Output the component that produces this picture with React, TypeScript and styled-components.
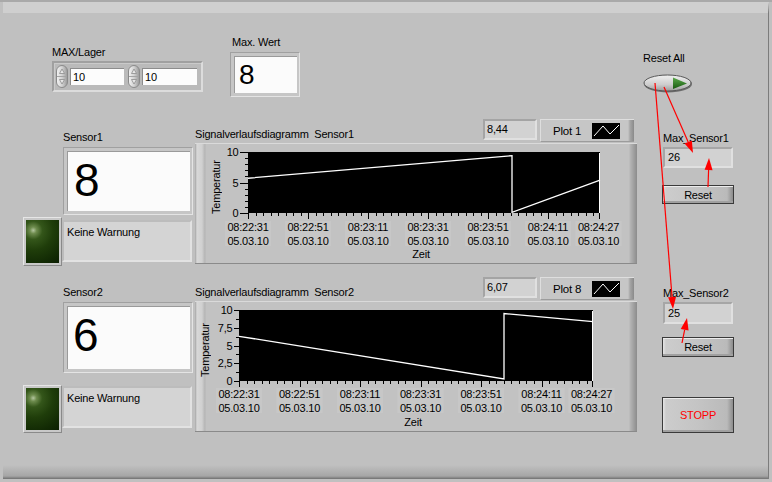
import React from "react";
import styled, { createGlobalStyle } from "styled-components";

const GlobalStyle = createGlobalStyle`
  html, body {
    margin: 0;
    padding: 0;
    background: #c0c0c0;
  }
  body {
    font-family: "Liberation Sans", Arial, sans-serif;
    font-size: 11px;
    letter-spacing: -0.2px;
    color: #000;
  }
`;

const Screen = styled.div`
  position: relative;
  width: 772px;
  height: 482px;
  box-sizing: border-box;
  padding: 2px 0 0 3px;
  overflow: hidden;
  background: linear-gradient(to bottom, #a9a9a9 0, #a9a9a9 2px, #c0c0c0 2px);
`;

const Frame = styled.div`
  display: flex;
  width: 766px;
  height: 477px;
  box-sizing: border-box;
  border-top: 11px solid #cfcfcf;
  border-right: 1px solid #7c7c7c;
  background: linear-gradient(
    to bottom,
    #c0c0c0 0,
    #c0c0c0 calc(100% - 14px),
    #a6a6a6 calc(100% - 3px),
    #707070 100%
  );
`;

const Main = styled.div`
  display: flex;
  flex-direction: column;
  width: 637px;
`;

const TopRow = styled.div`
  display: flex;
  align-items: flex-start;
  height: 106px;
`;

const Control = styled.div<{ $left: number; $top: number }>`
  display: flex;
  flex-direction: column;
  align-items: flex-start;
  margin: ${(p) => p.$top}px 0 0 ${(p) => p.$left}px;
`;

const Label = styled.div<{ $gap?: number; $left?: number }>`
  line-height: 13px;
  white-space: nowrap;
  margin-bottom: ${(p) => p.$gap ?? 0}px;
  margin-left: ${(p) => p.$left ?? 0}px;
`;

/* MAX/Lager cluster */
const Cluster = styled.div`
  display: flex;
  align-items: center;
  gap: 4px;
  width: 151px;
  height: 31px;
  box-sizing: border-box;
  padding-left: 2px;
  background: #bababa;
  border: 2px solid;
  border-color: #a0a0a0 #dcdcdc #dcdcdc #a0a0a0;
  box-shadow: inset 1px 1px 0 #cacaca;
`;

const NumberControl = styled.div`
  display: flex;
  align-items: center;
  gap: 2px;
`;

const NumField = styled.div<{ $w: number }>`
  width: ${(p) => p.$w}px;
  height: 17px;
  box-sizing: border-box;
  padding-left: 2px;
  line-height: 16px;
  background: #fcfcfc;
  border-top: 1px solid #8c8c8c;
  border-left: 1px solid #8c8c8c;
`;

function Spinner() {
  return (
    <svg width="12" height="23" viewBox="0 0 12 23">
      <defs>
        <linearGradient id="spin" x1="0" y1="0" x2="1" y2="0">
          <stop offset="0" stopColor="#f4f4f4" />
          <stop offset="0.5" stopColor="#d2d2d2" />
          <stop offset="1" stopColor="#989898" />
        </linearGradient>
      </defs>
      <rect x="0.5" y="0.5" width="11" height="22" rx="5.5" fill="url(#spin)" stroke="#8a8a8a" />
      <line x1="1" y1="11.5" x2="11" y2="11.5" stroke="#a4a4a4" />
      <path d="M6 4 L3.5 8.5 H8.5 Z" fill="#e8e8e8" stroke="#8c8c8c" strokeWidth="0.8" />
      <path d="M6 19 L3.5 14.5 H8.5 Z" fill="#e8e8e8" stroke="#8c8c8c" strokeWidth="0.8" />
    </svg>
  );
}

/* numeric indicators */
const Indicator = styled.div<{ $w: number; $h: number }>`
  width: ${(p) => p.$w}px;
  height: ${(p) => p.$h}px;
  box-sizing: border-box;
  padding: 3px 2px 3px 3px;
  background: #c6c6c6;
  border: 1px solid;
  border-color: #a0a0a0 #e4e4e4 #e4e4e4 #a0a0a0;
`;

const IndicatorValue = styled.div<{ $size: number; $indent: number; $lift: number }>`
  display: flex;
  align-items: center;
  height: 100%;
  box-sizing: border-box;
  padding: 0 0 ${(p) => p.$lift}px ${(p) => p.$indent}px;
  background: #fbfbfb;
  border-top: 1px solid #9a9a9a;
  border-left: 1px solid #9a9a9a;
  font-size: ${(p) => p.$size}px;
  line-height: 1;
  letter-spacing: 0;
`;

/* sensor rows */
const SensorRow = styled.div<{ $top: number }>`
  display: grid;
  grid-template-columns: 173px 442px;
  align-items: start;
  margin: ${(p) => p.$top}px 0 0 19px;
`;

const SensorBlock = styled.div<{ $pad: number }>`
  display: flex;
  flex-direction: column;
  align-items: flex-start;
  padding-top: ${(p) => p.$pad}px;
`;

const SensorLabel = styled.div<{ $gap: number }>`
  margin: 0 0 ${(p) => p.$gap}px 41px;
  line-height: 13px;
`;

const SensorValue = styled.div`
  margin-left: 41px;
`;

const WarnRow = styled.div<{ $top: number }>`
  display: flex;
  align-items: flex-start;
  margin: ${(p) => p.$top}px 0 0 1px;
`;

const Led = styled.div<{ $h: number }>`
  width: 39px;
  height: ${(p) => p.$h}px;
  box-sizing: border-box;
  padding: 2px 2px 2px 2px;
  background: #c8c8c8;
  border: 1px solid;
  border-color: #e6e6e6 #8a8a8a #8a8a8a #e6e6e6;
`;

const LedLight = styled.div`
  height: 100%;
  background: radial-gradient(
    circle at 22% 24%,
    #b4c6a0 0,
    #6e8c4e 8%,
    #34561a 22%,
    #1f3d0a 48%,
    #122a04 80%,
    #0c1f02 100%
  );
`;

const StringBox = styled.div<{ $h: number; $top: number }>`
  width: 130px;
  height: ${(p) => p.$h}px;
  margin-top: ${(p) => p.$top}px;
  box-sizing: border-box;
  padding: 4px 3px;
  line-height: 13px;
  background: #d4d4d4;
  border: 2px solid;
  border-color: #bcbcbc #e2e2e2 #e2e2e2 #bcbcbc;
`;

/* graphs */
const GraphBlock = styled.div`
  display: flex;
  flex-direction: column;
`;

const GraphHeader = styled.div`
  display: flex;
  align-items: flex-end;
  height: 23px;
  padding-right: 3px;
`;

const GraphTitle = styled.div`
  margin: 0 auto 1px 0;
  line-height: 13px;
  white-space: pre;
`;

const ValueDisplay = styled.div`
  align-self: flex-start;
  width: 54px;
  height: 21px;
  margin-right: 3px;
  box-sizing: border-box;
  padding-left: 2px;
  line-height: 17px;
  background: #d2d2d2;
  border: 2px solid;
  border-color: #a4a4a4 #e0e0e0 #e0e0e0 #a4a4a4;
`;

const Legend = styled.div`
  display: flex;
  align-items: center;
  width: 94px;
  height: 23px;
  box-sizing: border-box;
  padding: 0 14px 0 12px;
  background: linear-gradient(
    to right,
    #c6c6c6 0,
    #c6c6c6 calc(100% - 6px),
    #a6a6a6 calc(100% - 4px),
    #8a8a8a 100%
  );
  border-top: 1px solid #dedede;
  border-left: 1px solid #dedede;
  border-bottom: 1px solid #9c9c9c;
`;

const LegendName = styled.span`
  margin-right: auto;
  font-size: 11.5px;
`;

const GraphFrame = styled.div<{ $h: number; $title: number; $chartH: number }>`
  display: grid;
  grid-template-columns: ${(p) => p.$title}px 1fr 7px;
  grid-template-rows: ${(p) => p.$chartH}px 13px;
  height: ${(p) => p.$h}px;
  margin-top: 1px;
  box-sizing: border-box;
  border-top: 1px solid #dadada;
  border-bottom: 1px solid #8a8a8a;
  background: linear-gradient(
    to right,
    #a4a4a4 0,
    #d8d8d8 2px,
    #d0d0d0 7px,
    #b4b4b4 10px,
    #c2c2c2 11px,
    #c2c2c2 calc(100% - 8px),
    #b6b6b6 calc(100% - 7px),
    #8c8c8c 100%
  );
`;

const AxisTitle = styled.div<{ $top: number; $h: number }>`
  grid-row: 1;
  grid-column: 1;
  justify-self: end;
  align-self: start;
  height: ${(p) => p.$h}px;
  margin: ${(p) => p.$top}px 1px 0 0;
  writing-mode: vertical-rl;
  transform: rotate(180deg);
  text-align: center;
  line-height: 13px;
  white-space: nowrap;
`;

const ChartSvg = styled.svg`
  grid-row: 1;
  grid-column: 2;
  display: block;
  font-family: "Liberation Sans", Arial, sans-serif;
  font-size: 11px;
`;

const AxisName = styled.div<{ $left: number; $w: number }>`
  grid-row: 2;
  grid-column: 2;
  width: ${(p) => p.$w}px;
  margin-left: ${(p) => p.$left}px;
  box-sizing: border-box;
  padding-right: 6px;
  text-align: center;
  line-height: 13px;
`;

const TIMES = ["08:22:31", "08:22:51", "08:23:11", "08:23:31", "08:23:51", "08:24:11", "08:24:27"];

type GraphSpec = {
  title: string;
  value: string;
  plot: string;
  frameH: number;
  titleCol: number;
  chartH: number;
  plotX: number;
  plotY: number;
  plotW: number;
  plotH: number;
  yLabels: string[];
  yMinor: number;
  yMajorLen: number;
  xStep: number;
  xLabelY: number;
  series: [number, number][];
};

function Chart({ g, width }: { g: GraphSpec; width: number }) {
  const { plotX, plotY, plotW, plotH } = g;
  const bottom = plotY + plotH;
  const majors = g.yLabels.length - 1;
  const totalMinor = majors * g.yMinor;

  const yTicks = [];
  for (let i = 0; i <= totalMinor; i++) {
    const y = Math.round(plotY + (plotH * i) / totalMinor) + 0.5;
    const major = i % g.yMinor === 0;
    yTicks.push(
      <line key={i} x1={plotX - (major ? g.yMajorLen : 3)} x2={plotX} y1={y} y2={y} />
    );
  }

  const xTicks = [];
  const minorStep = g.xStep / 8;
  for (let i = 0; plotX + i * minorStep <= plotX + plotW; i++) {
    const x = Math.round(plotX + i * minorStep) + 0.5;
    const major = i % 8 === 0;
    xTicks.push(<line key={i} x1={x} x2={x} y1={bottom} y2={bottom + (major ? 6 : 3)} />);
  }
  const endX = Math.round(plotX + plotW - 1) + 0.5;
  xTicks.push(<line key="end" x1={endX} x2={endX} y1={bottom} y2={bottom + 6} />);

  const labelX = [0, 1, 2, 3, 4, 5].map((k) => plotX + k * g.xStep).concat(plotX + plotW - 1.5);

  const points = g.series
    .map(([px, v]) => `${plotX + px},${plotY + plotH * (1 - v / 10)}`)
    .join(" ");

  return (
    <ChartSvg width={width} height={g.chartH} viewBox={`0 0 ${width} ${g.chartH}`}>
      <g stroke="#000" strokeWidth="1" shapeRendering="crispEdges">
        {yTicks}
        {xTicks}
      </g>
      {g.yLabels.map((t, i) => (
        <text key={t} x={plotX - g.yMajorLen - 1.5} y={plotY + (plotH * i) / majors + 4} textAnchor="end">
          {t}
        </text>
      ))}
      <rect x={plotX} y={plotY} width={plotW} height={plotH} fill="#000" />
      <line x1={plotX + plotW - 0.5} x2={plotX + plotW - 0.5} y1={plotY + 1} y2={bottom} stroke="#fff" />
      <polyline points={points} fill="none" stroke="#fff" strokeWidth="1.3" />
      {labelX.map((x, i) => (
        <g key={i}>
          <rect x={x - 23} y={g.xLabelY - 6} width="46" height="25" fill="#c7c7c7" />
          <text x={x} y={g.xLabelY + 4} textAnchor="middle">
            {TIMES[i]}
          </text>
          <text x={x} y={g.xLabelY + 18} textAnchor="middle">
            05.03.10
          </text>
        </g>
      ))}
    </ChartSvg>
  );
}

function Swatch() {
  return (
    <svg width="28" height="16" viewBox="0 0 28 16">
      <rect width="28" height="16" fill="#000" />
      <polyline points="2,13 11,3 18,11 27,2" fill="none" stroke="#fff" strokeWidth="1" />
    </svg>
  );
}

function Graph({ g }: { g: GraphSpec }) {
  const chartW = 442 - g.titleCol - 7;
  return (
    <GraphBlock>
      <GraphHeader>
        <GraphTitle>{g.title}</GraphTitle>
        <ValueDisplay>{g.value}</ValueDisplay>
        <Legend>
          <LegendName>{g.plot}</LegendName>
          <Swatch />
        </Legend>
      </GraphHeader>
      <GraphFrame $h={g.frameH} $title={g.titleCol} $chartH={g.chartH}>
        <AxisTitle $top={g.plotY} $h={g.plotH + 10}>
          Temperatur
        </AxisTitle>
        <Chart g={g} width={chartW} />
        <AxisName $left={g.plotX} $w={g.plotW}>
          Zeit
        </AxisName>
      </GraphFrame>
    </GraphBlock>
  );
}

const graph1: GraphSpec = {
  title: "Signalverlaufsdiagramm  Sensor1",
  value: "8,44",
  plot: "Plot 1",
  frameH: 121,
  titleCol: 29,
  chartH: 104,
  plotX: 24,
  plotY: 8,
  plotW: 352,
  plotH: 61,
  yLabels: ["10", "5", "0"],
  yMinor: 5,
  yMajorLen: 8,
  xStep: 60,
  xLabelY: 83,
  series: [
    [0, 5.7],
    [264, 9.4],
    [264, 0.1],
    [352, 5.4],
  ],
};

const graph2: GraphSpec = {
  title: "Signalverlaufsdiagramm  Sensor2",
  value: "6,07",
  plot: "Plot 8",
  frameH: 131,
  titleCol: 18,
  chartH: 114,
  plotX: 26,
  plotY: 8,
  plotW: 354,
  plotH: 71,
  yLabels: ["10", "7,5", "5", "2,5", "0"],
  yMinor: 2,
  yMajorLen: 5,
  xStep: 60.5,
  xLabelY: 92,
  series: [
    [0, 6.3],
    [265, 0.3],
    [265, 9.5],
    [354, 8.35],
  ],
};

/* right column */
const Side = styled.div`
  display: flex;
  flex-direction: column;
  align-items: flex-start;
  padding-left: 3px;
`;

const SideLabel = styled.div<{ $top: number; $left?: number }>`
  margin: ${(p) => p.$top}px 0 0 ${(p) => p.$left ?? 0}px;
  line-height: 13px;
  white-space: nowrap;
`;

const SideField = styled.div<{ $top: number; $h: number }>`
  width: 70px;
  height: ${(p) => p.$h}px;
  margin: ${(p) => p.$top}px 0 0 20px;
  box-sizing: border-box;
  padding-left: 3px;
  line-height: ${(p) => p.$h - 4}px;
  background: #d2d2d2;
  border: 2px solid;
  border-color: #a6a6a6 #e0e0e0 #e0e0e0 #a6a6a6;
`;

const PanelButton = styled.button<{ $top: number; $h: number; $color?: string }>`
  display: block;
  width: 72px;
  height: ${(p) => p.$h}px;
  margin: ${(p) => p.$top}px 0 0 19px;
  padding: 0;
  box-sizing: border-box;
  border: 1px solid #3a3a3a;
  background: linear-gradient(
    to right,
    #e4e4e4 0,
    #cccccc 3px,
    #c4c4c4 50%,
    #bababa calc(100% - 6px),
    #8c8c8c 100%
  );
  box-shadow: inset 0 1px 0 #ececec, inset 0 -2px 0 #a0a0a0;
  font: inherit;
  letter-spacing: inherit;
  color: ${(p) => p.$color ?? "#000"};
`;

const OvalButton = styled.svg`
  display: block;
  margin-top: 9px;
`;

function ResetAllButton() {
  return (
    <OvalButton width="50" height="19" viewBox="0 0 50 19">
      <defs>
        <linearGradient id="oval" x1="0" y1="0" x2="0" y2="1">
          <stop offset="0" stopColor="#f0f0f0" />
          <stop offset="0.6" stopColor="#cdcdcd" />
          <stop offset="1" stopColor="#9c9c9c" />
        </linearGradient>
        <linearGradient id="go" x1="0" y1="0" x2="0" y2="1">
          <stop offset="0" stopColor="#5aa84a" />
          <stop offset="1" stopColor="#185a10" />
        </linearGradient>
      </defs>
      <ellipse cx="25" cy="10" rx="24" ry="8.5" fill="#6e6e6e" />
      <ellipse cx="24.5" cy="9" rx="23.5" ry="8" fill="url(#oval)" stroke="#585858" />
      <path d="M30 3.5 L44 9.5 L30 15 Z" fill="url(#go)" />
    </OvalButton>
  );
}

/* red wiring arrows on top of the panel */
const Overlay = styled.svg`
  position: absolute;
  top: 0;
  left: 0;
  pointer-events: none;
`;

const ARROWS: [number, number, number, number][] = [
  [655, 83, 673, 309],
  [664, 87, 693, 153],
  [708, 187, 709, 158],
  [682, 343, 687, 318],
];

function Arrow({ a }: { a: [number, number, number, number] }) {
  const [x1, y1, x2, y2] = a;
  const len = Math.hypot(x2 - x1, y2 - y1);
  const ux = (x2 - x1) / len;
  const uy = (y2 - y1) / len;
  const bx = x2 - ux * 12;
  const by = y2 - uy * 12;
  const pts = `${x2},${y2} ${bx - uy * 4},${by + ux * 4} ${bx + uy * 4},${by - ux * 4}`;
  return (
    <g>
      <line x1={x1} y1={y1} x2={bx} y2={by} stroke="#ff0000" strokeWidth="1.2" />
      <polygon points={pts} fill="#ff0000" />
    </g>
  );
}

export default function App() {
  return (
    <>
      <GlobalStyle />
      <Screen>
        <Frame>
          <Main>
            <TopRow>
              <Control $left={49} $top={33}>
                <Label $gap={2}>MAX/Lager</Label>
                <Cluster>
                  <NumberControl>
                    <Spinner />
                    <NumField $w={54}>10</NumField>
                  </NumberControl>
                  <NumberControl>
                    <Spinner />
                    <NumField $w={55}>10</NumField>
                  </NumberControl>
                </Cluster>
              </Control>
              <Control $left={27} $top={23}>
                <Label $gap={3} $left={2}>
                  Max. Wert
                </Label>
                <Indicator $w={70} $h={45}>
                  <IndicatorValue $size={28} $indent={4} $lift={0}>
                    8
                  </IndicatorValue>
                </Indicator>
              </Control>
            </TopRow>

            <SensorRow $top={0}>
              <SensorBlock $pad={12}>
                <SensorLabel $gap={3}>Sensor1</SensorLabel>
                <SensorValue>
                  <Indicator $w={130} $h={68}>
                    <IndicatorValue $size={46} $indent={6} $lift={4}>
                      8
                    </IndicatorValue>
                  </Indicator>
                </SensorValue>
                <WarnRow $top={2}>
                  <Led $h={49}>
                    <LedLight />
                  </Led>
                  <StringBox $h={42} $top={3}>
                    Keine Warnung
                  </StringBox>
                </WarnRow>
              </SensorBlock>
              <Graph g={graph1} />
            </SensorRow>

            <SensorRow $top={11}>
              <SensorBlock $pad={9}>
                <SensorLabel $gap={3}>Sensor2</SensorLabel>
                <SensorValue>
                  <Indicator $w={130} $h={71}>
                    <IndicatorValue $size={46} $indent={5} $lift={7}>
                      6
                    </IndicatorValue>
                  </Indicator>
                </SensorValue>
                <WarnRow $top={12}>
                  <Led $h={48}>
                    <LedLight />
                  </Led>
                  <StringBox $h={42} $top={1}>
                    Keine Warnung
                  </StringBox>
                </WarnRow>
              </SensorBlock>
              <Graph g={graph2} />
            </SensorRow>
          </Main>

          <Side>
            <SideLabel $top={39}>Reset All</SideLabel>
            <ResetAllButton />
            <SideLabel $top={39} $left={20}>
              Max_Sensor1
            </SideLabel>
            <SideField $top={2} $h={21}>
              26
            </SideField>
            <PanelButton $top={17} $h={19}>
              Reset
            </PanelButton>
            <SideLabel $top={83} $left={20}>
              Max_Sensor2
            </SideLabel>
            <SideField $top={2} $h={22}>
              25
            </SideField>
            <PanelButton $top={13} $h={20}>
              Reset
            </PanelButton>
            <PanelButton $top={40} $h={36} $color="#ff0000">
              STOPP
            </PanelButton>
          </Side>
        </Frame>

        <Overlay width="772" height="482" viewBox="0 0 772 482">
          {ARROWS.map((a, i) => (
            <Arrow key={i} a={a} />
          ))}
        </Overlay>
      </Screen>
    </>
  );
}
